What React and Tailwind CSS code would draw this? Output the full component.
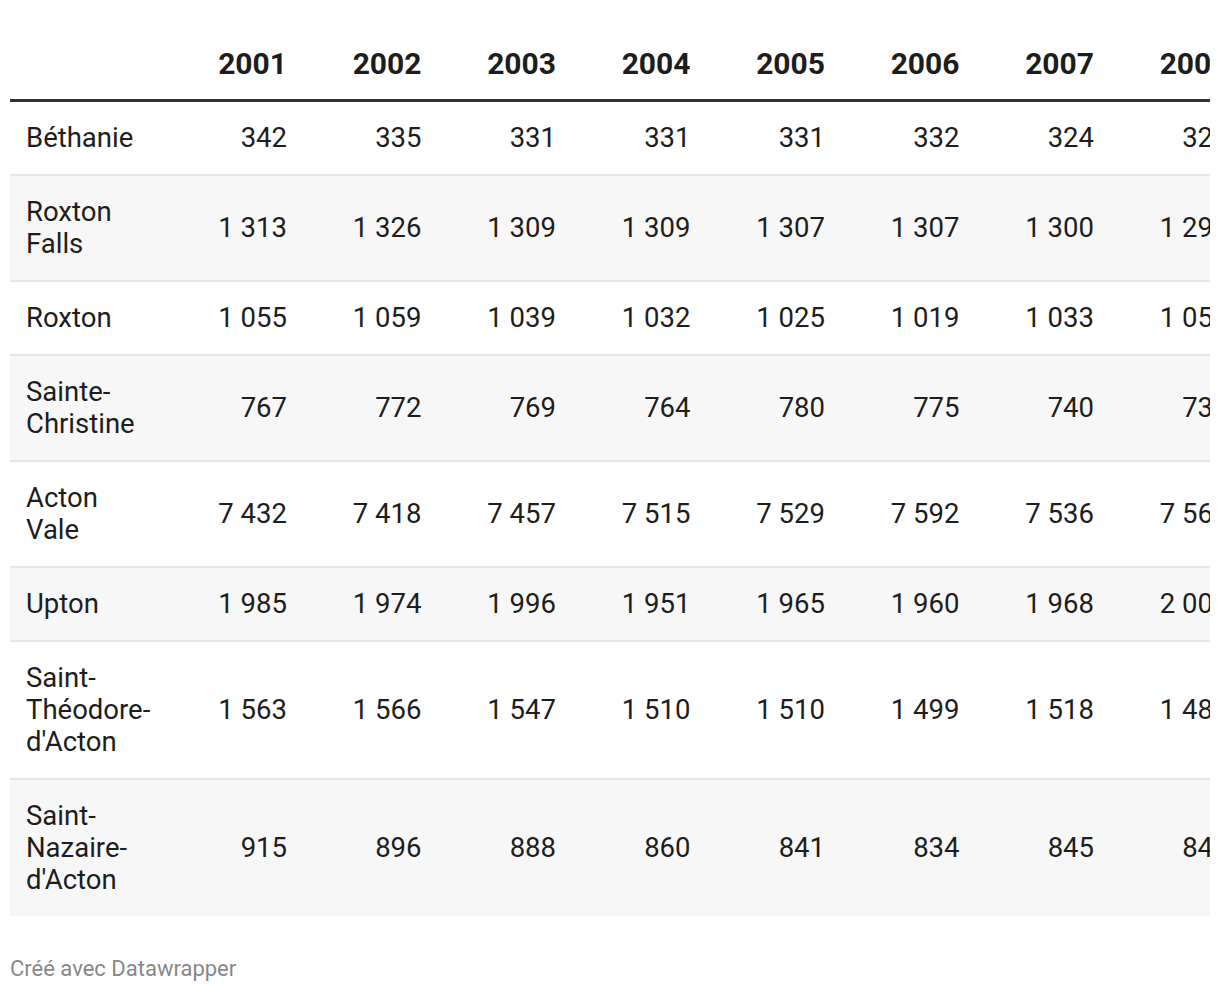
const years = ["2001", "2002", "2003", "2004", "2005", "2006", "2007", "2008"];

const rows = [
  { name: ["Béthanie"], values: ["342", "335", "331", "331", "331", "332", "324", "321"] },
  { name: ["Roxton", "Falls"], values: ["1 313", "1 326", "1 309", "1 309", "1 307", "1 307", "1 300", "1 295"] },
  { name: ["Roxton"], values: ["1 055", "1 059", "1 039", "1 032", "1 025", "1 019", "1 033", "1 052"] },
  { name: ["Sainte-", "Christine"], values: ["767", "772", "769", "764", "780", "775", "740", "736"] },
  { name: ["Acton", "Vale"], values: ["7 432", "7 418", "7 457", "7 515", "7 529", "7 592", "7 536", "7 563"] },
  { name: ["Upton"], values: ["1 985", "1 974", "1 996", "1 951", "1 965", "1 960", "1 968", "2 004"] },
  { name: ["Saint-", "Théodore-", "d'Acton"], values: ["1 563", "1 566", "1 547", "1 510", "1 510", "1 499", "1 518", "1 482"] },
  { name: ["Saint-", "Nazaire-", "d'Acton"], values: ["915", "896", "888", "860", "841", "834", "845", "842"] },
];

export default function App() {
  return (
    <div className="min-h-screen bg-white px-[10px] text-[#1d1d1d] font-['Roboto',sans-serif]">
      <div className="w-[1200px] overflow-hidden">
        <table className="table-fixed border-collapse w-[1234.5px]">
          <colgroup>
            <col className="w-[158.5px]" />
            {years.map((y) => (
              <col key={y} className="w-[134.5px]" />
            ))}
          </colgroup>
          <thead>
            <tr className="border-b-[3px] border-[#333333]">
              <th className="h-[100px]" />
              {years.map((y) => (
                <th
                  key={y}
                  className="h-[100px] align-bottom pb-[17px] pr-[16px] text-right text-[30px] leading-[36px] font-bold whitespace-nowrap"
                >
                  {y}
                </th>
              ))}
            </tr>
          </thead>
          <tbody>
            {rows.map((row, i) => (
              <tr
                key={i}
                className={
                  (i % 2 === 1 ? "bg-[#f7f7f7] " : "bg-white ") +
                  (i < rows.length - 1 ? "border-b-2 border-[#e6e6e6]" : "")
                }
              >
                <td className="pl-[16px] pr-[8px] pt-[20px] pb-[20px] align-middle text-[27.5px] leading-[32px]">
                  {row.name.map((line, j) => (
                    <div key={j} className="whitespace-nowrap">
                      {line}
                    </div>
                  ))}
                </td>
                {row.values.map((v, j) => (
                  <td
                    key={j}
                    className="pr-[16px] align-middle text-right text-[27.5px] leading-[32px] whitespace-nowrap"
                  >
                    {v.replace(" ", "\u00a0")}
                  </td>
                ))}
              </tr>
            ))}
          </tbody>
        </table>
      </div>
      <p className="mt-[40px] text-[22px] leading-[26px] text-[#888888]">Créé avec Datawrapper</p>
    </div>
  );
}
